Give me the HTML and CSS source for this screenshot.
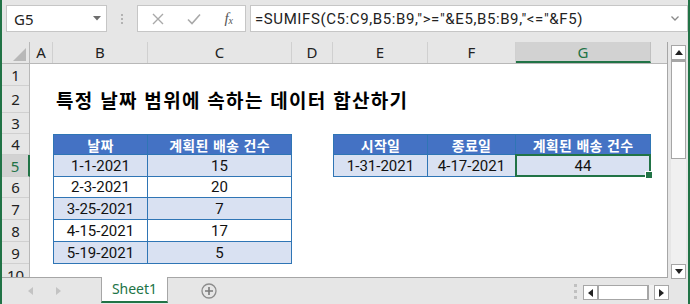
FILE: index.html
```html
<!DOCTYPE html>
<html lang="ko">
<head>
    <meta charset="UTF-8">
    <title>SUMIFS 날짜 범위</title>
    <link rel="stylesheet" href="styles.css">
</head>
<body>
    <div class="app">
        <div class="formula-row">
            <div class="name-box">
                <span>G5</span>
                <svg class="caret" width="8" height="5" viewBox="0 0 8 5"><path d="M0 0h8L4 4.5z" fill="#6d6d6d"/></svg>
            </div>
            <div class="grip"><i></i><i></i><i></i></div>
            <div class="fx-buttons">
                <svg width="12" height="12" viewBox="0 0 12 12"><path d="M1 1l10 10M11 1L1 11" stroke="#a9a9a9" stroke-width="1.4" fill="none"/></svg>
                <svg width="14" height="12" viewBox="0 0 14 12"><path d="M1 6.5l4 4L13 1.5" stroke="#a9a9a9" stroke-width="1.6" fill="none"/></svg>
                <span class="fx">f<sub>x</sub></span>
            </div>
            <div class="formula-input">
                <span>=SUMIFS(C5:C9,B5:B9,"&gt;="&amp;E5,B5:B9,"&lt;="&amp;F5)</span>
                <svg width="8" height="5" viewBox="0 0 8 5"><path d="M0.5 0.5L4 4l3.5-3.5" stroke="#8a8a8a" stroke-width="1.3" fill="none"/></svg>
            </div>
        </div>

        <div class="workspace">
            <div class="sheet">
                <div class="col-headers">
                    <div class="corner"><span class="select-all"></span></div>
                    <div class="ch w-a">A</div>
                    <div class="ch w-b">B</div>
                    <div class="ch w-c">C</div>
                    <div class="ch w-d">D</div>
                    <div class="ch w-e">E</div>
                    <div class="ch w-f">F</div>
                    <div class="ch w-g active">G</div>
                    <div class="ch w-h"></div>
                </div>
                <div class="sheet-body">
                    <div class="row-headers">
                        <div class="rh h22">1</div>
                        <div class="rh h27">2</div>
                        <div class="rh h21">3</div>
                        <div class="rh h21">4</div>
                        <div class="rh h22 active">5</div>
                        <div class="rh h21">6</div>
                        <div class="rh h22">7</div>
                        <div class="rh h22">8</div>
                        <div class="rh h22">9</div>
                        <div class="rh h13">10</div>
                    </div>
                    <div class="cells">
                        <div class="title">특정 날짜 범위에 속하는 데이터 합산하기</div>

                        <div class="tbl tbl-dates">
                            <div class="th">날짜</div>
                            <div class="th">계획된 배송 건수</div>
                            <div class="td band">1-1-2021</div>
                            <div class="td band">15</div>
                            <div class="td">2-3-2021</div>
                            <div class="td">20</div>
                            <div class="td band">3-25-2021</div>
                            <div class="td band">7</div>
                            <div class="td">4-15-2021</div>
                            <div class="td">17</div>
                            <div class="td band">5-19-2021</div>
                            <div class="td band">5</div>
                        </div>

                        <div class="tbl tbl-criteria">
                            <div class="th">시작일</div>
                            <div class="th">종료일</div>
                            <div class="th">계획된 배송 건수</div>
                            <div class="td band">1-31-2021</div>
                            <div class="td band">4-17-2021</div>
                            <div class="td band selected">44</div>
                        </div>
                    </div>
                </div>
            </div>
            <div class="vscroll">
                <div class="sb-btn"><svg width="8" height="5" viewBox="0 0 8 5"><path d="M0 5h8L4 0z" fill="#222"/></svg></div>
                <div class="vtrack">
                    <div class="vthumb"></div>
                </div>
                <div class="sb-btn"><svg width="8" height="5" viewBox="0 0 8 5"><path d="M0 0h8L4 5z" fill="#222"/></svg></div>
            </div>
        </div>

        <div class="tab-bar">
            <div class="tab-nav">
                <svg width="5" height="8" viewBox="0 0 5 8"><path d="M5 0v8L0 4z" fill="#c3c3c3"/></svg>
                <svg width="5" height="8" viewBox="0 0 5 8"><path d="M0 0v8l5-4z" fill="#c3c3c3"/></svg>
            </div>
            <div class="sheet-tab">Sheet1</div>
            <svg class="add-sheet" width="16" height="16" viewBox="0 0 16 16">
                <circle cx="8" cy="8" r="7" stroke="#8c8c8c" stroke-width="1.3" fill="none"/>
                <path d="M8 4v8M4 8h8" stroke="#7a7a7a" stroke-width="1.6"/>
            </svg>
            <div class="spacer"></div>
            <div class="grip grip-h"><i></i><i></i><i></i></div>
            <div class="hscroll">
                <div class="sb-btn"><svg width="5" height="8" viewBox="0 0 5 8"><path d="M5 0v8L0 4z" fill="#222"/></svg></div>
                <div class="hthumb"></div>
                <div class="htrack"></div>
                <div class="sb-btn"><svg width="5" height="8" viewBox="0 0 5 8"><path d="M0 0v8l5-4z" fill="#222"/></svg></div>
            </div>
        </div>
    </div>
</body>
</html>
```

FILE: styles.css
```css
* {
    box-sizing: border-box;
}
body {
    margin: 0;
    font-family: "Noto Sans", "Noto Sans CJK KR", sans-serif;
}
.app {
    width: 690px;
    height: 304px;
    background: #e6e6e6;
    border-left: 2px solid #217346;
    border-right: 2px solid #217346;
    display: flex;
    flex-direction: column;
    overflow: hidden;
}

/* formula bar */
.formula-row {
    height: 42px;
    flex: none;
    display: flex;
    align-items: flex-start;
    padding: 5px 0 0 4px;
}
.name-box, .fx-buttons, .formula-input {
    height: 27px;
    background: #fff;
    border: 1px solid #c6c6c6;
    display: flex;
    align-items: center;
}
.name-box {
    width: 101px;
    padding: 0 5px 0 7px;
    justify-content: space-between;
    font-size: 15px;
    color: #222;
}
.grip {
    width: 30px;
    height: 27px;
    display: flex;
    flex-direction: column;
    align-items: center;
    justify-content: center;
    gap: 2px;
}
.grip i {
    width: 2px;
    height: 2px;
    background: #b3b3b3;
}
.fx-buttons {
    width: 109px;
    padding: 0 12px 0 14px;
    justify-content: space-between;
}
.fx {
    font-family: "Liberation Serif", serif;
    font-style: italic;
    font-size: 15px;
    color: #555;
    line-height: 1;
}
.fx sub {
    font-size: 10px;
    vertical-align: -1px;
}
.formula-input {
    margin-left: 4px;
    flex: 1;
    padding: 0 8px 0 4px;
    justify-content: space-between;
    font-family: Roboto, sans-serif;
    font-size: 15px;
    letter-spacing: 0.6px;
    color: #222;
}

/* sheet area */
.workspace {
    height: 236px;
    flex: none;
    display: flex;
}
.sheet {
    width: 666px;
    background: #fff;
    border-right: 1px solid #a6a6a6;
    border-bottom: 1px solid #a6a6a6;
    overflow: hidden;
}
.col-headers {
    display: flex;
    height: 22px;
    background: #e6e6e6;
    border-bottom: 1px solid #b8b8b8;
}
.corner {
    width: 28px;
    border-right: 1px solid #b8b8b8;
    position: relative;
}
.select-all {
    position: absolute;
    right: 3px;
    bottom: 2px;
    width: 0;
    height: 0;
    border-left: 13px solid transparent;
    border-bottom: 13px solid #b8b8b8;
}
.ch {
    border-right: 1px solid #d0d0d0;
    text-align: center;
    font-size: 15px;
    line-height: 21px;
    color: #222;
}
.ch.active {
    background: #d2d2d2;
    color: #217346;
    border-bottom: 2px solid #217346;
    border-right-color: #c0c0c0;
}
.w-a { width: 23px; }
.w-b { width: 95px; }
.w-c { width: 144px; }
.w-d { width: 41px; }
.w-e { width: 95px; }
.w-f { width: 88px; }
.w-g { width: 135px; }
.w-h { width: 16px; border-right: none; }

.sheet-body {
    display: flex;
}
.row-headers {
    width: 28px;
    background: #e6e6e6;
    border-right: 1px solid #b8b8b8;
}
.rh {
    border-bottom: 1px solid #d0d0d0;
    text-align: center;
    font-size: 15px;
    color: #222;
    display: flex;
    align-items: center;
    justify-content: center;
    overflow: hidden;
}
.rh.active {
    background: #d2d2d2;
    color: #217346;
    margin-right: -1px;
    border-right: 2px solid #217346;
}
.h13 { height: 13px; align-items: flex-start; line-height: 22px; border-bottom: none; }
.h21 { height: 21px; }
.h22 { height: 22px; }
.h27 { height: 27px; }

.cells {
    display: grid;
    grid-template-columns: 23px 95px 144px 41px 95px 88px 135px 16px;
    grid-template-rows: 22px 27px 21px 21px 22px 21px 22px 22px 22px 13px;
    font-family: Roboto, "Noto Sans CJK KR", sans-serif;
    font-size: 15px;
    color: #111;
}
.title {
    grid-row: 2;
    grid-column: 2 / -1;
    padding-left: 3px;
    font-family: "Noto Sans CJK KR", sans-serif;
    font-weight: bold;
    font-size: 19px;
    letter-spacing: 1.3px;
    line-height: 27px;
    white-space: nowrap;
    color: #000;
}

/* data tables */
.tbl {
    display: grid;
    border-top: 1px solid #2f75b5;
    border-left: 1px solid #2f75b5;
    align-self: start;
}
.tbl-dates {
    grid-row: 4 / 10;
    grid-column: 2 / 4;
    grid-template-columns: 94px 144px;
    grid-template-rows: 20px 22px 21px 22px 22px 22px;
}
.tbl-criteria {
    grid-row: 4 / 6;
    grid-column: 5 / 8;
    grid-template-columns: 94px 88px 135px;
    grid-template-rows: 20px 22px;
}
.th, .td {
    border-right: 1px solid #2f75b5;
    border-bottom: 1px solid #2f75b5;
    display: flex;
    align-items: center;
    justify-content: center;
    white-space: nowrap;
}
.th {
    background: #4472c4;
    color: #fff;
    font-family: "Noto Sans CJK KR", sans-serif;
    font-weight: bold;
    font-size: 14px;
    letter-spacing: 0.3px;
}
.td.band {
    background: #d9e1f2;
}
.td.selected {
    position: relative;
}
.td.selected::after {
    content: "";
    position: absolute;
    left: -1px;
    top: -1px;
    right: -1px;
    bottom: -1px;
    border: 2px solid #217346;
}
.td.selected::before {
    content: "";
    position: absolute;
    right: -3px;
    bottom: -3px;
    width: 6px;
    height: 6px;
    background: #217346;
    border: 1px solid #fff;
    z-index: 1;
}

/* scrollbars */
.vscroll {
    width: 20px;
    display: flex;
    flex-direction: column;
    padding: 3px 2px 0 3px;
}
.sb-btn {
    width: 15px;
    height: 15px;
    flex: none;
    background: #fff;
    border: 1px solid #a6a6a6;
    display: flex;
    align-items: center;
    justify-content: center;
}
.vtrack {
    flex: 1;
    background: #f0f0f0;
}
.vthumb {
    height: 99px;
    background: #fff;
    border: 1px solid #a6a6a6;
    border-top: 2px solid #a6a6a6;
}
.vscroll .sb-btn:last-child {
    margin-bottom: -1px;
}

/* sheet tabs */
.tab-bar {
    height: 26px;
    flex: none;
    display: flex;
    align-items: flex-start;
}
.tab-nav {
    width: 99px;
    height: 25px;
    display: flex;
    align-items: center;
    padding-left: 26px;
    gap: 23px;
}
.sheet-tab {
    width: 67px;
    height: 26px;
    margin-top: -1px;
    background: #fff;
    border-left: 1px solid #a6a6a6;
    border-right: 1px solid #a6a6a6;
    border-bottom: 2px solid #217346;
    color: #217346;
    font-size: 14px;
    text-align: center;
    line-height: 24px;
}
.add-sheet {
    margin: 5px 0 0 33px;
}
.spacer {
    flex: 1;
}
.grip-h {
    width: 16px;
    height: 25px;
    padding-top: 1px;
    gap: 3px;
}
.grip-h i {
    width: 3px;
    height: 3px;
    background: #c0c0c0;
}
.hscroll {
    display: flex;
    margin: 7px 19px 0 0;
    height: 15px;
}
.hthumb {
    width: 51px;
    background: #fff;
    border: 1px solid #a6a6a6;
    border-right-width: 2px;
}
.htrack {
    width: 5px;
    background: #f0f0f0;
}
```
